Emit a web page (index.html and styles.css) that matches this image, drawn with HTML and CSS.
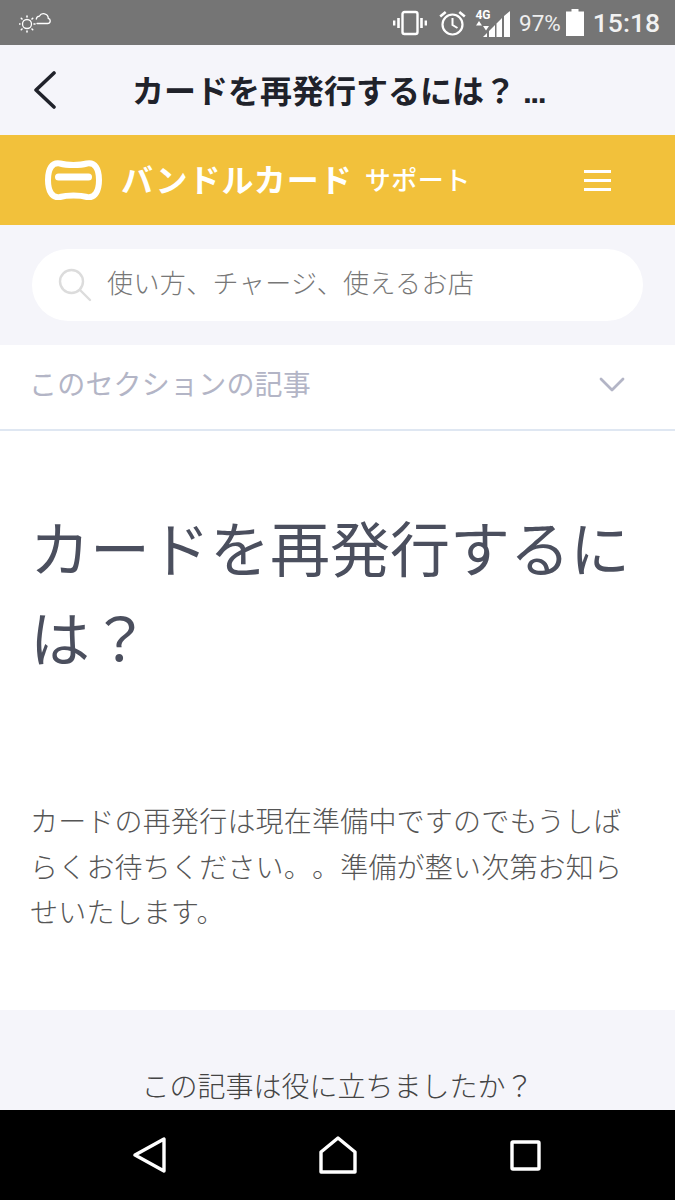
FILE: index.html
```html
<!DOCTYPE html>
<html lang="ja">
<head>
<meta charset="utf-8">
<title>カードを再発行するには？</title>
<link rel="stylesheet" href="styles.css">
</head>
<body>
<div class="phone">
  <div class="status">
    <svg class="weather" width="32" height="20" viewBox="0 0 32 20" fill="none" stroke="#fff" stroke-width="1.300" stroke-linecap="round">
      <circle cx="8" cy="11" r="4.500"/>
      <path d="M8 3v1M8 18v1M0 11h1M15 11h1M2.300 5.300l.7.7M13 16l.7.700M2.300 16.700l.7-.7M13 6l.7-.7" stroke-width="1.600"/>
      <path d="M18 10.500h10.500a2.600 2.600 0 0 0 .8-5.100 4.800 4.800 0 0 0-9-2.200 3.400 3.400 0 0 0-3 2.800"/>
    </svg>
    <div class="status-right">
      <svg class="vib" width="34" height="26" viewBox="0 0 34 26" fill="none" stroke="#fff">
        <rect x="9.500" y="2" width="15" height="22" rx="2" stroke-width="2.400"/>
        <path d="M5.500 8v10M28.500 8v10" stroke-width="2.600"/>
        <path d="M1.200 10.500v5M32.800 10.500v5" stroke-width="2.400"/>
      </svg>
      <svg class="alarm" width="27" height="26" viewBox="0 0 27 26" fill="none" stroke="#fff" stroke-width="2.200">
        <circle cx="13.500" cy="14.500" r="10"/>
        <path d="M13.500 8v7l5 3" stroke-width="2"/>
        <path d="M1.200 6.500l5.500-4.500M25.800 6.500L20.300 2" stroke-width="2.600"/>
      </svg>
      <div class="net">
        <span class="net-label">4G</span>
        <svg width="13" height="10" viewBox="0 0 13 10" fill="#fff"><path d="M3 0l3 4.500H0zM10 9.500L7 5h6z"/></svg>
      </div>
      <svg class="signal" width="27" height="26" viewBox="0 0 27 26" fill="#fff">
        <path d="M0 26l4-4v4zM6 26v-6l6-6v12zM13.500 26V12.500l5.500-5.500v19zM21 26V5l6-5v26z"/>
      </svg>
      <span class="pct">97%</span>
      <svg class="batt" width="18" height="27" viewBox="0 0 18 27" fill="#fff"><path d="M5.500 0h7v2.500H18V27H0V2.500h5.500z"/></svg>
      <span class="time">15:18</span>
    </div>
  </div>

  <div class="nav">
    <svg class="back" width="26" height="38" viewBox="0 0 26 38" fill="none" stroke="#20222a" stroke-width="3.600" stroke-linecap="round" stroke-linejoin="round">
      <path d="M22 2L4 19l18 17"/>
    </svg>
    <div class="nav-title">カードを再発行するには？ <span class="dots">...</span></div>
  </div>

  <header class="brand">
    <div class="brand-left">
      <svg class="logo" width="60" height="40" viewBox="0 0 60 40" fill="none" stroke="#fff">
        <path d="M17 3.500C24 5.500 37 5.500 44 3.500 52 2 56 9 56 20S52 38.500 44 37C37 35 24 35 17 37 9 38.500 5 31 5 20S9 2 17 3.500z" stroke-width="6"/>
        <path d="M15.500 17h30" stroke-width="7" stroke-linecap="round"/>
      </svg>
      <span class="brand-name">バンドルカード</span>
      <span class="brand-sub">サポート</span>
    </div>
    <div class="menu"><span></span><span></span><span></span></div>
  </header>

  <div class="search-wrap">
    <div class="search">
      <svg width="34" height="34" viewBox="0 0 34 34" fill="none" stroke="#dcdcdc" stroke-width="2.400" stroke-linecap="round">
        <circle cx="13.500" cy="13.500" r="11.500"/>
        <path d="M22 22l10 10"/>
      </svg>
      <span class="placeholder">使い方、チャージ、使えるお店</span>
    </div>
  </div>

  <div class="section">
    <span>このセクションの記事</span>
    <svg width="26" height="16" viewBox="0 0 26 16" fill="none" stroke="#b3b5c6" stroke-width="2.800" stroke-linecap="round" stroke-linejoin="round">
      <path d="M2 2l11 11L24 2"/>
    </svg>
  </div>

  <main class="article">
    <h1>カードを再発行するには？</h1>
    <p>カードの再発行は現在準備中ですのでもうしばらくお待ちください。。準備が整い次第お知らせいたします。</p>
  </main>

  <div class="feedback">この記事は役に立ちましたか？</div>

  <div class="softkeys">
    <svg width="34" height="36" viewBox="0 0 34 36" fill="none" stroke="#fff" stroke-width="3.400" stroke-linejoin="round"><path d="M31 2v32L2 18z"/></svg>
    <svg width="38" height="38" viewBox="0 0 38 38" fill="none" stroke="#fff" stroke-width="3.400" stroke-linejoin="round"><path d="M2 36V16L19 2l17 14v20z"/></svg>
    <svg width="31" height="31" viewBox="0 0 31 31" fill="none" stroke="#fff" stroke-width="3.400" stroke-linejoin="round"><rect x="2" y="2" width="27" height="27" rx="1"/></svg>
  </div>
</div>
</body>
</html>
```

FILE: styles.css
```css
* { box-sizing: border-box; }
html, body { margin: 0; padding: 0; }
body { font-family: "Noto Sans CJK JP", "Noto Sans", sans-serif; background: #fff; text-spacing-trim: space-all; }
.phone { width: 675px; height: 1200px; display: flex; flex-direction: column; overflow: hidden; }

.status { flex: 0 0 45px; height: 45px; background: #757575; color: #fff; display: flex; justify-content: space-between; align-items: center; padding: 0 15px 0 19px; }
.status-right { display: flex; align-items: center; }
.vib { margin-right: 12px; }
.alarm { margin-right: 10px; }
.net { display: flex; flex-direction: column; align-items: center; width: 14px; margin-right: -7px; margin-bottom: 6px; }
.net-label { font-family: "Roboto", sans-serif; font-size: 12px; font-weight: 700; line-height: 12px; }
.signal { margin-right: 9px; margin-top: 2px; }
.pct { font-family: "Roboto", sans-serif; font-size: 22.500px; margin-right: 5px; color: #eee; }
.batt { margin-right: 9px; margin-bottom: 1px; }
.time { font-family: "Roboto", sans-serif; font-size: 26.500px; font-weight: 500; color: #f2f2f2; }

.nav { flex: 0 0 90px; background: #f5f5fa; display: flex; align-items: center; padding-left: 32px; }
.back { flex: none; }
.nav-title { margin-left: 74px; padding-bottom: 3px; font-family: "Liberation Sans", "Noto Sans CJK JP", sans-serif; font-size: 32px; font-weight: 700; color: #20222a; white-space: nowrap; }
.dots { letter-spacing: -1.500px; margin-left: -2px; }

.brand { flex: 0 0 90px; background: #f2c13b; display: flex; align-items: center; justify-content: space-between; padding: 0 64px 0 43px; }
.brand-left { display: flex; align-items: center; }
.logo { flex: none; }
.brand-name { margin-left: 18px; padding-bottom: 4px; color: #fff; font-size: 32px; font-weight: 700; letter-spacing: 1px; white-space: nowrap; }
.brand-sub { margin-left: 12px; padding-bottom: 3px; color: #fff; font-size: 26px; font-weight: 500; letter-spacing: .5px; white-space: nowrap; }
.menu { display: flex; flex-direction: column; gap: 6px; width: 27px; }
.menu span { display: block; height: 3px; background: #fff; }

.search-wrap { flex: 0 0 120px; background: #f5f5fa; padding: 24px 32px; }
.search { height: 72px; background: #fff; border-radius: 36px; display: flex; align-items: center; padding-left: 26px; }
.placeholder { margin-left: 15px; padding-bottom: 7px; font-size: 26px; font-weight: 300; letter-spacing: .4px; color: #777; white-space: nowrap; }

.section { flex: 0 0 86px; background: #fff; border-bottom: 2px solid #dfe7f2; display: flex; align-items: center; justify-content: space-between; padding: 0 50px 4px 29px; color: #b3b5c6; font-size: 28px; letter-spacing: .2px; }
.section span { padding-bottom: 5px; }

.article { flex: 0 0 579px; background: #fff; padding: 70px 30px 0; color: #4b4f5e; }
h1 { margin: 0; font-size: 60px; font-weight: 400; line-height: 90px; color: #4b4f5e; }
p { margin: 117px 0 0; font-size: 28px; font-weight: 300; line-height: 45.600px; letter-spacing: .2px; color: #555; }

.feedback { flex: 1 1 auto; background: #f5f5fa; text-align: center; padding-top: 53px; font-size: 28px; font-weight: 300; color: #444; line-height: 44px; }

.softkeys { flex: 0 0 90px; background: #000; display: flex; align-items: center; padding-left: 133px; }
.softkeys svg:nth-child(2) { margin-left: 152px; }
.softkeys svg:nth-child(3) { margin-left: 153px; }
```
